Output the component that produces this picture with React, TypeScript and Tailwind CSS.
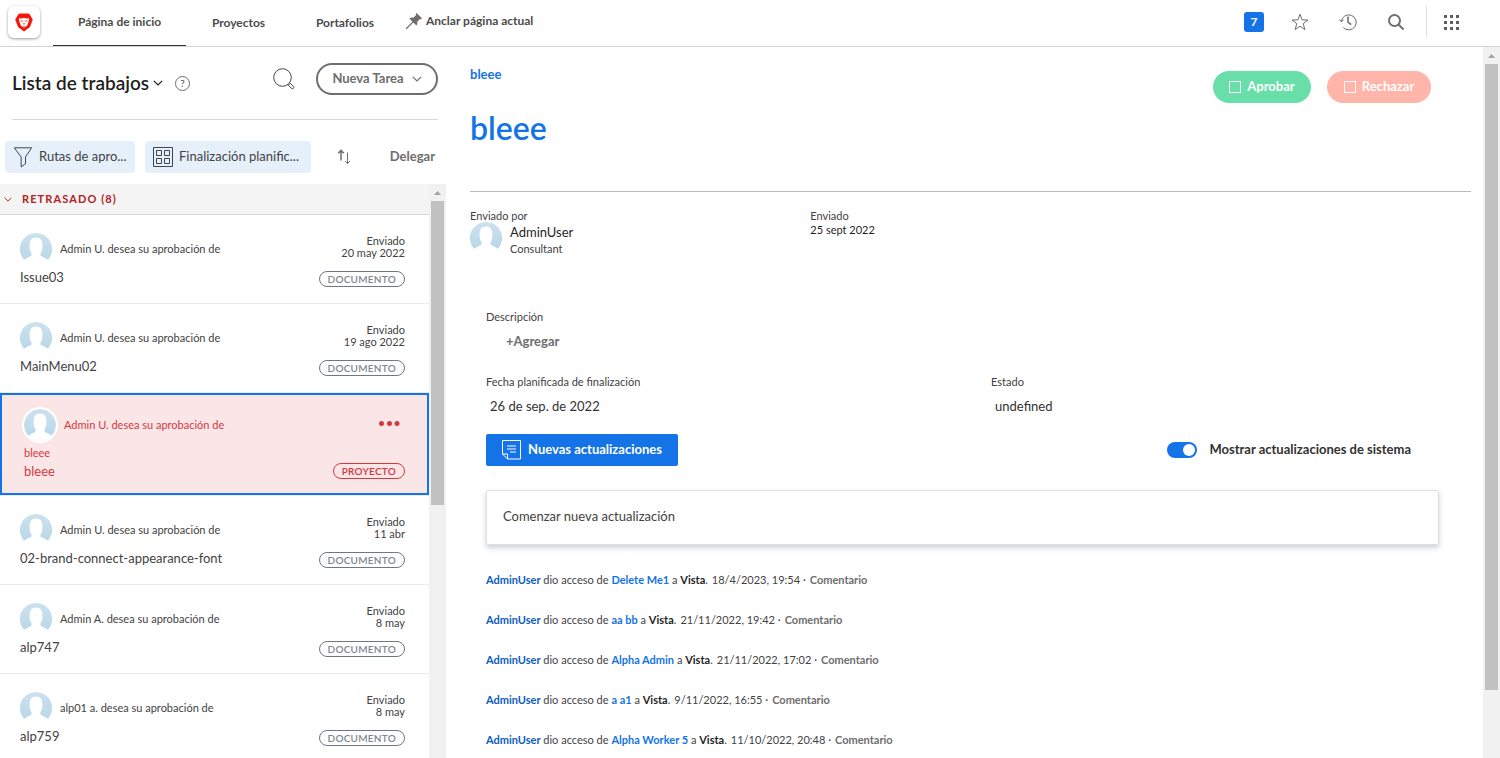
import React from "react";

const PANEL_ITEMS_TOP = [
  { who: "Admin U.", title: "Issue03", date: "20 may 2022" },
  { who: "Admin U.", title: "MainMenu02", date: "19 ago 2022" },
];

const PANEL_ITEMS_BOTTOM = [
  { who: "Admin U.", title: "02-brand-connect-appearance-font", date: "11 abr" },
  { who: "Admin A.", title: "alp747", date: "8 may" },
  { who: "alp01 a.", title: "alp759", date: "8 may" },
];

const UPDATES = [
  { target: "Delete Me1", when: "18/4/2023, 19:54" },
  { target: "aa bb", when: "21/11/2022, 19:42" },
  { target: "Alpha Admin", when: "21/11/2022, 17:02" },
  { target: "a a1", when: "9/11/2022, 16:55" },
  { target: "Alpha Worker 5", when: "11/10/2022, 20:48" },
];

function Logo() {
  return (
    <svg viewBox="0 0 18 19" className="h-[19px] w-[18px]" aria-hidden="true">
      <path d="M4.500.500h9l1.500 1.300 2.700 4.700-.8 2.500-1.900 5L9 18.600 3 14 1.100 9 .3 6.500 3 1.800z" fill="#f3180d" />
      <path d="M4 5.200l3 .3 2-.7 2 .7 3-.3-.4 3.600-1.600 4L9 14.800l-3-2-1.600-4z" fill="#fff" />
      <path d="M5.200 6.900l2.800 1-.9 1zM12.800 6.900l-2.800 1 .9 1zM7.600 10.600h2.800L9 11.800zM7 13h4l-2 .7z" fill="#f3180d" />
    </svg>
  );
}

function Avatar({ ring }: { ring?: boolean }) {
  return (
    <svg
      viewBox="0 0 32 32"
      className={ring ? "size-8 shrink-0 rounded-full bg-white outline-2 outline-white" : "size-8 shrink-0"}
      aria-hidden="true"
    >
      <defs>
        <linearGradient id="avatar-sky" x1="0" y1="0" x2="0" y2="1">
          <stop offset="0" stopColor="#cde1ee" />
          <stop offset="1" stopColor="#b9d7e9" />
        </linearGradient>
      </defs>
      <path
        fill="url(#avatar-sky)"
        d="M16 0a16 16 0 0 1 12 26.700c-2.100-1.300-4.700-2.300-7-3.600-.6-.4-.7-1.900-.4-3 1.200-1.600 1.600-3.500 1.800-5.600C22.700 8.500 21.200 4.500 16 4.500S9.300 8.500 9.600 14.500c.2 2.100.6 4 1.800 5.600.3 1.100.2 2.600-.4 3-2.300 1.300-4.900 2.300-7 3.600A16 16 0 0 1 16 0z"
      />
    </svg>
  );
}

function Chevron({ className }: { className: string }) {
  return (
    <svg viewBox="0 0 10 6" className={className} fill="none" stroke="currentColor" strokeWidth="1.2" aria-hidden="true">
      <path d="M.8.800 5 5 9.200.800" />
    </svg>
  );
}

function ScrollBar({ thumb }: { thumb: string }) {
  return (
    <div className="flex w-[17px] shrink-0 flex-col items-center bg-[#f1f1f1]" aria-hidden="true">
      <svg viewBox="0 0 17 17" className="h-[17px] w-[17px] shrink-0 fill-[#a3a3a3]">
        <path d="M5 11h7L8.500 7z" />
      </svg>
      <div className={thumb} />
    </div>
  );
}

function ListItem({ who, title, date }: { who: string; title: string; date: string }) {
  return (
    <li className="flex h-[89px] justify-between border-b border-[#eaeaea] pt-[18px] pr-6 pl-5 text-[#424242]">
      <div>
        <div className="flex h-8 items-center gap-2">
          <Avatar />
          <span className="text-[11px]">{who} desea su aprobación de</span>
        </div>
        <a href="#item" className="mt-[2px] block text-[13px] leading-5">
          {title}
        </a>
      </div>
      <div className="flex flex-col items-end text-right text-[11px] leading-3">
        <span className="mt-[2px]">Enviado</span>
        <span>{date}</span>
        <span className="mt-3 flex h-4 items-center rounded-full border border-[#6f7782] px-2 text-[10px] font-semibold tracking-wide text-[#808791]">
          DOCUMENTO
        </span>
      </div>
    </li>
  );
}

function Header() {
  return (
    <header className="flex h-[47px] shrink-0 items-stretch border-b border-[#d3d3d3] text-xs font-bold text-[#4b4b4b]">
      <a href="#home" aria-label="Inicio" className="mt-[6px] ml-2 flex size-8 items-center justify-center rounded-md bg-white shadow-[0_1px_3px_rgba(0,0,0,0.4)]">
        <Logo />
      </a>
      <nav className="ml-[13px] flex">
        <a href="#inicio" className="flex w-[133px] items-center justify-center border-b border-[#323232] pb-[2px]">
          Página de inicio
        </a>
        <a href="#proyectos" className="flex w-[105px] items-center justify-center">
          Proyectos
        </a>
        <a href="#portafolios" className="flex w-[108px] items-center justify-center">
          Portafolios
        </a>
      </nav>
      <button type="button" className="ml-[7px] flex items-center gap-1 pb-1">
        <svg viewBox="0 0 16 16" className="size-4 fill-[#6e6e6e]" aria-hidden="true">
          <path d="M10.600 0 16 5.300l-1.200.9-.8-.3-2.800 2.800c.4 1.500.1 2.900-.8 3.900L7.300 9.600.9 16H0v-.9l6.400-6.400-3-3.100c1-1 2.500-1.200 3.900-.8L10.100 2l-.3-.9z" />
        </svg>
        Anclar página actual
      </button>
      <div className="ml-auto flex items-center pb-[2px] text-[#6e6e6e]">
        <button type="button" aria-label="Notificaciones" className="flex size-5 items-center justify-center rounded-[3px] bg-[#1473e6] text-xs text-white">
          7
        </button>
        <button type="button" aria-label="Favoritos" className="ml-[27px]">
          <svg viewBox="0 0 18 18" className="size-[18px]" fill="none" stroke="currentColor" aria-hidden="true">
            <path d="M9 1.200 11 6.800l6 .2-4.800 3.700 1.700 5.900L9 13.200l-4.900 3.400 1.700-5.900L1 7l6-.2z" />
          </svg>
        </button>
        <button type="button" aria-label="Recientes" className="ml-[30px]">
          <svg viewBox="0 0 18 18" className="size-[18px]" fill="none" stroke="currentColor" aria-hidden="true">
            <path d="M2.300 8.500a7.500 7.500 0 1 1 2 6M.4 6.500l1.900 2.300 2.300-1.900" />
            <path d="M9 3.500V9l3.200 2.600" strokeWidth="1.600" />
          </svg>
        </button>
        <button type="button" aria-label="Buscar" className="ml-[30px]">
          <svg viewBox="0 0 18 18" className="size-[18px]" fill="none" stroke="currentColor" strokeWidth="2" aria-hidden="true">
            <circle cx="7.500" cy="7.500" r="5.500" />
            <path d="m11.500 11.500 5 5" />
          </svg>
        </button>
        <span className="ml-[21px] h-8 w-px bg-[#e1e1e1]" />
        <button type="button" aria-label="Menú principal" className="mr-[41px] ml-[17px]">
          <svg viewBox="0 0 15 15" className="size-[15px] fill-[#5e5e5e]" aria-hidden="true">
            <path d="M0 0h3v3H0zM6 0h3v3H6zM12 0h3v3h-3zM0 6h3v3H0zM6 6h3v3H6zM12 6h3v3h-3zM0 12h3v3H0zM6 12h3v3H6zM12 12h3v3h-3z" />
          </svg>
        </button>
      </div>
    </header>
  );
}

function WorkList() {
  return (
    <aside className="flex w-[446px] shrink-0 flex-col">
      <div className="mr-2 ml-3 flex h-[73px] items-center border-b border-[#d8d8d8]">
        <button type="button" className="flex items-center gap-1 text-[#1f1f1f]">
          <h2 className="text-[19px] leading-6 font-semibold">Lista de trabajos</h2>
          <Chevron className="h-[6px] w-[10px]" />
        </button>
        <button type="button" aria-label="Ayuda" className="ml-3 flex size-[15px] items-center justify-center rounded-full border border-[#6e6e6e] text-[10px] text-[#4b4b4b]">
          ?
        </button>
        <button type="button" aria-label="Buscar en la lista" className="mr-[21px] mb-2 ml-auto text-[#3f4450]">
          <svg viewBox="0 0 22 22" className="size-[22px]" fill="none" stroke="currentColor" aria-hidden="true">
            <circle cx="9.500" cy="9.500" r="8.800" />
            <path d="m15.300 17.200 3.300 3.300c1.200 1 2.900-.7 1.900-1.900l-3.300-3.300z" />
          </svg>
        </button>
        <button type="button" className="mb-2 flex h-8 w-[122px] items-center justify-center gap-2 rounded-full border-2 border-[#6e6e6e] text-[13px] font-bold text-[#6e6e6e]">
          Nueva Tarea
          <Chevron className="h-[6px] w-[10px]" />
        </button>
      </div>

      <div className="flex h-16 items-center pt-[10px] pr-[11px] pl-[5px] text-[13px] text-[#424242]">
        <button type="button" className="flex h-8 w-[130px] items-center gap-[6px] rounded-[4px] bg-[#e6f0fa] px-2 whitespace-nowrap">
          <svg viewBox="0 0 20 21" className="h-[21px] w-5 shrink-0" fill="none" stroke="#3f4450" aria-hidden="true">
            <path d="M1.300.8h17.400l-6.200 9.100v6.800l-4.300 3.300-.1-10.100z" />
          </svg>
          Rutas de apro...
        </button>
        <button type="button" className="ml-[10px] flex h-8 w-[166px] items-center gap-[6px] rounded-[4px] bg-[#e6f0fa] px-2 whitespace-nowrap">
          <svg viewBox="0 0 20 20" className="size-5 shrink-0" fill="none" stroke="#3f4450" aria-hidden="true">
            <path d="M.5.500h19v19H.500zM3.500 3.500h5v5h-5zM11.500 3.500h5v5h-5zM3.500 11.500h5v5h-5zM11.500 11.500h5v5h-5z" />
          </svg>
          Finalización planific...
        </button>
        <button type="button" aria-label="Ordenar" className="ml-[26px] text-[#6e6e6e]">
          <svg viewBox="0 0 14 16" className="h-4 w-[14px]" fill="none" stroke="currentColor" aria-hidden="true">
            <path d="M4 11.500V1.500M1.200 4.200 4 1.400l2.800 2.800" strokeWidth="1.500" />
            <path d="M10.500 3.500v11M8 12l2.500 2.500L13 12" />
          </svg>
        </button>
        <button type="button" className="ml-auto font-bold text-[#6e6e6e]">
          Delegar
        </button>
      </div>

      <div className="flex min-h-0 flex-1">
        <div className="min-w-0 flex-1 overflow-hidden">
          <button type="button" className="flex h-[31px] w-full items-center gap-[10px] border-b border-[#d8d8d8] bg-[#f4f4f4] pl-1 text-[11px] font-bold tracking-widest text-[#b3211f]">
            <Chevron className="h-[5px] w-2" />
            RETRASADO (8)
          </button>
          <ul>
            {PANEL_ITEMS_TOP.map((item) => (
              <ListItem key={item.title} {...item} />
            ))}
            <li className="border-b border-[#eaeaea]">
              <div className="flex h-[102px] justify-between border-2 border-[#1473e6] bg-[#fae6e7] px-[22px] py-[14px] text-[11px] text-[#d7373f]">
                <div>
                  <div className="flex h-8 items-center gap-2">
                    <Avatar ring />
                    <span>Admin U. desea su aprobación de</span>
                  </div>
                  <span className="mt-1 block leading-4">bleee</span>
                  <a href="#bleee" className="block text-[13px] leading-5">
                    bleee
                  </a>
                </div>
                <div className="flex flex-col items-end justify-between">
                  <button type="button" aria-label="Más opciones" className="mt-3 mr-[5px]">
                    <svg viewBox="0 0 21 5" className="h-[5px] w-[21px] fill-[#d7373f]" aria-hidden="true">
                      <circle cx="2.500" cy="2.500" r="2.500" />
                      <circle cx="10.500" cy="2.500" r="2.500" />
                      <circle cx="18" cy="2.500" r="2.500" />
                    </svg>
                  </button>
                  <span className="flex h-4 items-center rounded-full border border-[#d7373f] px-2 text-[10px] font-semibold tracking-wide">
                    PROYECTO
                  </span>
                </div>
              </div>
            </li>
            {PANEL_ITEMS_BOTTOM.map((item) => (
              <ListItem key={item.title} {...item} />
            ))}
          </ul>
        </div>
        <ScrollBar thumb="h-[53%] w-[13px] bg-[#c1c1c1]" />
      </div>
    </aside>
  );
}

function Detail() {
  return (
    <main className="min-w-0 flex-1 overflow-hidden pr-3 pl-6 text-[11px] text-[#424242]">
      <div className="flex h-[145px] items-start justify-between border-b border-[#b9b9b9]">
        <div className="pt-[17px] font-bold text-[#1473e6]">
          <a href="#bleee" className="block text-[13px] leading-5">
            bleee
          </a>
          <h1 className="mt-6 text-[32px] leading-10 font-semibold">bleee</h1>
        </div>
        <div className="mt-6 mr-10 flex gap-4 text-[13px] font-bold text-white">
          <button type="button" className="flex h-8 w-[98px] items-center justify-center gap-[6px] rounded-full bg-[#68dea9]">
            <span className="size-3 border border-white" />
            Aprobar
          </button>
          <button type="button" className="flex h-8 w-[104px] items-center justify-center gap-[6px] rounded-full bg-[#ffb5aa]">
            <span className="size-3 border border-white" />
            Rechazar
          </button>
        </div>
      </div>

      <section className="grid grid-cols-[34fr_66fr] pt-[17px] leading-[14px]">
        <div>
          <div>Enviado por</div>
          <div className="flex gap-2">
            <div className="-mt-px">
              <Avatar />
            </div>
            <div>
              <a href="#adminuser" className="mt-px block text-[13px] leading-4 text-[#1f1f1f]">
                AdminUser
              </a>
              <div className="mt-[2px]">Consultant</div>
            </div>
          </div>
        </div>
        <div>
          <div>Enviado</div>
          <div className="text-[#1f1f1f]">25 sept 2022</div>
        </div>
      </section>

      <section className="mt-[53px] mr-8 ml-4">
        <div className="leading-4">Descripción</div>
        <button type="button" className="mt-[6px] ml-5 block text-[13px] leading-5 font-bold text-[#6e6e6e]">
          +Agregar
        </button>
        <div className="mt-[23px] grid grid-cols-[53fr_47fr]">
          <div>
            <div className="leading-4">Fecha planificada de finalización</div>
            <div className="mt-[6px] ml-1 text-[13px] leading-5 text-[#323232]">26 de sep. de 2022</div>
          </div>
          <div>
            <div className="leading-4">Estado</div>
            <div className="mt-[6px] ml-1 text-[13px] leading-5 text-[#323232]">undefined</div>
          </div>
        </div>

        <div className="mt-[18px] flex items-center justify-between">
          <button type="button" className="flex h-8 w-48 items-center justify-center gap-[6px] rounded-[2px] bg-[#1473e6] text-[13px] font-bold text-white">
            <svg viewBox="0 0 20 20" className="size-5" fill="none" stroke="currentColor" aria-hidden="true">
              <path d="M.5.500h18v18.500H5.500L.5 14zM.5 14h5v5M5 6h9M5 9h9M8 12h6" />
            </svg>
            Nuevas actualizaciones
          </button>
          <label className="mr-7 flex items-center gap-3 text-[13px] font-bold text-[#323232]">
            <input type="checkbox" role="switch" defaultChecked className="peer sr-only" />
            <span className="flex h-4 w-[30px] items-center justify-start rounded-full bg-[#8e8e8e] p-[2px] peer-checked:justify-end peer-checked:bg-[#1473e6]">
              <span className="size-3 rounded-full bg-white" />
            </span>
            Mostrar actualizaciones de sistema
          </label>
        </div>

        <input
          type="text"
          aria-label="Comenzar nueva actualización"
          placeholder="Comenzar nueva actualización"
          className="mt-6 block h-[55px] w-full rounded-[2px] border border-[#dfe0e1] px-4 pb-1 text-[13px] shadow-[0_3px_5px_rgba(60,80,100,0.25)] placeholder:text-[#424242]"
        />

        <ul className="mt-[15px]">
          {UPDATES.map((update) => (
            <li key={update.target} className="flex h-10 items-center gap-1 whitespace-pre">
              <span>
                <a href="#adminuser" className="font-bold text-[#0d5cbf]">AdminUser</a> dio acceso de{" "}
                <a href="#target" className="font-bold text-[#1473e6]">{update.target}</a> a{" "}
                <b className="text-[#1f1f1f]">Vista</b>.
              </span>
              <span>{update.when} ·</span>
              <button type="button" className="font-bold text-[#6e6e6e]">
                Comentario
              </button>
            </li>
          ))}
        </ul>
      </section>
    </main>
  );
}

export default function App() {
  return (
    <div className="flex h-screen flex-col overflow-hidden bg-white font-[Lato,'Noto_Sans',sans-serif]">
      <Header />
      <div className="flex min-h-0 flex-1">
        <WorkList />
        <Detail />
        <ScrollBar thumb="h-[88%] w-[13px] bg-[#c1c1c1]" />
      </div>
    </div>
  );
}
